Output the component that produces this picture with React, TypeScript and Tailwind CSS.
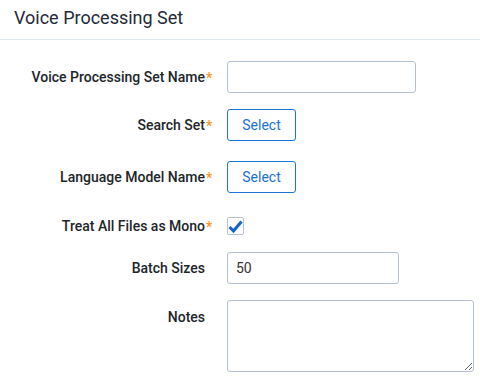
import React from "react";

function Label({ text, required }: { text: string; required?: boolean }) {
  return (
    <div className="w-[205px] shrink-0 text-right">
      <span className="relative text-[14px] font-medium text-[#212529]">
        {text}
        {required && (
          <span className="absolute left-full top-[-1px] ml-[1px] text-[#f7941d]">*</span>
        )}
      </span>
    </div>
  );
}

function SelectButton() {
  return (
    <button className="h-8 w-[69px] rounded-[3px] border border-[#1b74d8] bg-white text-[14px] text-[#1b6fd4]">
      Select
    </button>
  );
}

export default function App() {
  return (
    <div className="h-[381px] w-[480px] bg-white font-['Roboto',sans-serif]">
      <div className="border-b border-[#dfe8f1] px-[14px] pt-[6px] pb-[9px]">
        <h1 className="text-[18px] leading-6 text-[#1f2937]">Voice Processing Set</h1>
      </div>

      <div className="flex flex-col pt-[21px]">
        <div className="flex items-center gap-[22px]">
          <Label text="Voice Processing Set Name" required />
          <input className="h-8 w-[189px] rounded-[3px] border border-[#b3c2d6] px-2 text-[14px] outline-none" />
        </div>

        <div className="mt-4 flex items-center gap-[22px]">
          <Label text="Search Set" required />
          <SelectButton />
        </div>

        <div className="mt-5 flex items-center gap-[22px]">
          <Label text="Language Model Name" required />
          <SelectButton />
        </div>

        <div className="mt-[17px] flex h-8 items-center gap-[22px]">
          <Label text="Treat All Files as Mono" required />
          <span className="flex h-[18px] w-[17px] items-center justify-center rounded-[2px] border border-[#b3c2d6]">
            <svg width="15" height="13" viewBox="0 0 15 13">
              <path d="M1.5 7 L5.5 11 L13.5 1.5" fill="none" stroke="#1565c8" strokeWidth="3" />
            </svg>
          </span>
        </div>

        <div className="mt-[10px] flex items-center gap-[22px]">
          <Label text="Batch Sizes" />
          <input
            defaultValue="50"
            className="h-8 w-[172px] rounded-[3px] border border-[#b3c2d6] px-2 text-[14px] text-[#333] outline-none"
          />
        </div>

        <div className="mt-4 flex items-start gap-[22px]">
          <div className="pt-[5px]">
            <Label text="Notes" />
          </div>
          <textarea className="h-[72px] w-[247px] rounded-[3px] border border-[#b3c2d6] px-2 py-1 text-[14px] outline-none" />
        </div>
      </div>
    </div>
  );
}
